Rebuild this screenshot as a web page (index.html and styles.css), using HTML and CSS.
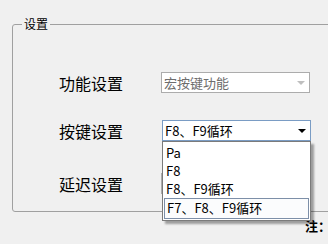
FILE: index.html
```html
<!DOCTYPE html>
<html lang="zh-CN">
<head>
  <meta charset="UTF-8" />
  <title>设置</title>
  <link rel="stylesheet" href="styles.css">
</head>
<body>
  <div class="group">
    <span class="group-title">设置</span>

    <div class="row">
      <span class="row-label">功能设置</span>
      <div class="combo combo-disabled">
        <span class="combo-text">宏按键功能</span>
        <span class="combo-arrow"></span>
      </div>
    </div>

    <div class="row">
      <span class="row-label">按键设置</span>
      <div class="combo combo-open">
        <span class="combo-text">F8、F9循环</span>
        <span class="combo-arrow"></span>
        <!-- open dropdown -->
        <ul class="drop-list">
          <li>Pa</li>
          <li>F8</li>
          <li>F8、F9循环</li>
          <li class="hot">F7、F8、F9循环</li>
        </ul>
      </div>
    </div>

    <div class="row row-last">
      <span class="row-label">延迟设置</span>
      <div class="combo">
        <span class="combo-text"></span>
        <span class="combo-arrow"></span>
      </div>
    </div>
  </div>

  <div class="note">注：</div>
</body>
</html>
```

FILE: styles.css
```css
body {
  margin: 0;
  background: #f0f0f0;
  font-family: "Noto Sans CJK SC", "Noto Sans", sans-serif;
  width: 328px;
  height: 244px;
  overflow: hidden;
}

.group {
  position: relative;
  margin: 24px 0 0 12px;
  width: 330px;
  height: 139px;
  border: 1px solid #a0a0a0;
  border-radius: 3px;
  padding-top: 47px;
  box-sizing: content-box;
}

.group-title {
  position: absolute;
  left: 9px;
  top: -9px;
  padding: 0 2px;
  background: #f0f0f0;
  font-size: 12px;
  line-height: 16px;
  color: #000;
}

.row {
  display: flex;
  align-items: center;
  height: 21px;
  margin-bottom: 27px;
}

.row-last {
  margin-top: 32px;
}

.row-label {
  width: 102px;
  padding-left: 46px;
  font-size: 16px;
  line-height: 21px;
  color: #000;
  position: relative;
  top: 1px;
}

.combo {
  position: relative;
  display: flex;
  align-items: center;
  width: 149px;
  height: 21px;
  box-sizing: border-box;
  border: 1px solid #acacac;
  background: #fff;
  padding-left: 2px;
}

.combo-text {
  flex: 1;
  font-size: 13px;
  line-height: 19px;
  color: #000;
  white-space: nowrap;
}

.combo-arrow {
  width: 0;
  height: 0;
  margin-right: 4px;
  border-left: 4px solid transparent;
  border-right: 4px solid transparent;
  border-top: 4px solid #000;
}

.combo-disabled .combo-text {
  color: #6d6d6d;
}

.combo-disabled .combo-arrow {
  border-top-color: #bfbfbf;
}

.combo-open {
  margin-left: 1px;
  border-color: #7a9cc4;
}

.drop-list {
  position: absolute;
  left: -1px;
  top: 20px;
  width: 149px;
  margin: 0;
  padding: 2px 0 1px;
  list-style: none;
  box-sizing: border-box;
  background: #fff;
  border: 1px solid #7b7b7b;
  box-shadow: 3px 3px 2px rgba(0, 0, 0, 0.35);
  z-index: 2;
}

.drop-list li {
  height: 18px;
  padding-left: 3px;
  font-size: 13px;
  line-height: 18px;
  color: #000;
  white-space: nowrap;
}

.drop-list li.hot {
  height: 19px;
  margin: 0 1px;
  padding-left: 2px;
  border: 1px solid #7d8fa8;
  line-height: 18px;
  background: #fbfcfd;
}

.note {
  margin: 7px 0 0 305px;
  font-size: 13px;
  font-weight: bold;
  line-height: 14px;
  white-space: nowrap;
}
```
